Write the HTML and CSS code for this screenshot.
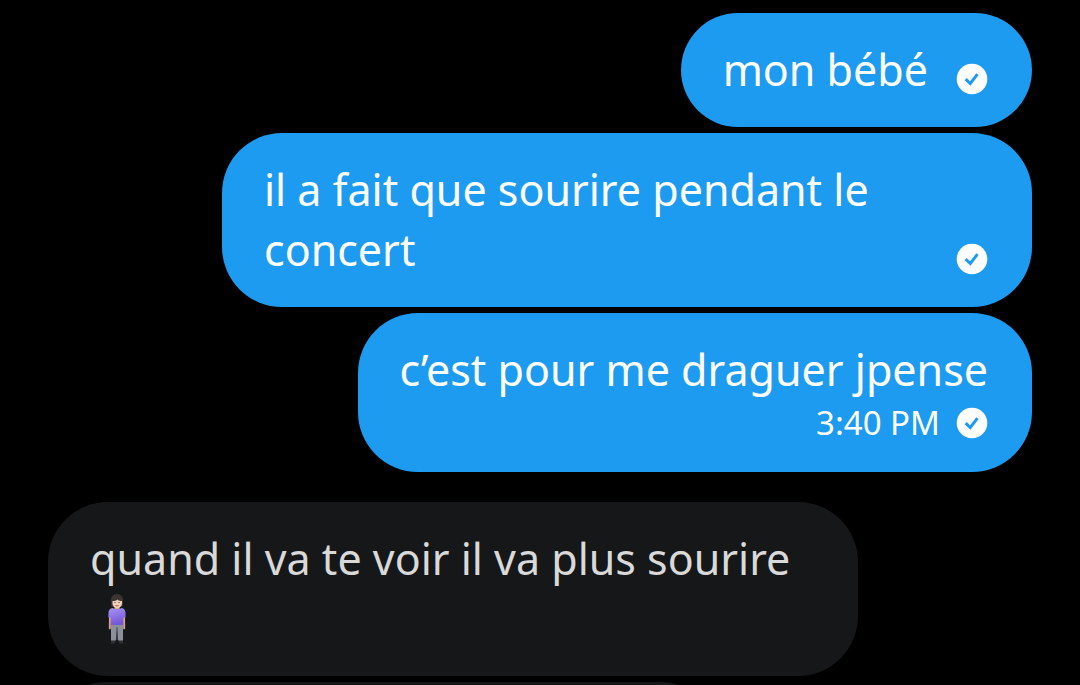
FILE: index.html
```
<!DOCTYPE html>
<html lang="fr">

<head>
    <meta charset="UTF-8">
    <meta name="viewport" content="width=device-width, initial-scale=1.0">
    <title>Messages</title>
    <link rel="stylesheet" href="styles.css">
</head>

<body>
    <!-- Shared icons -->
    <svg class="sprite" aria-hidden="true">
        <symbol id="check" viewBox="0 0 32 32">
            <circle cx="16" cy="16" r="15.3" fill="#fff" />
            <path d="M9.700 16.200l4.600 4.300 7.200-9.300" fill="none" stroke="#1d9bf0" stroke-width="3" />
        </symbol>
    </svg>

    <main class="thread">
        <div class="message sent">
            <p class="text">mon bébé</p>
            <svg class="check" role="img" aria-label="Sent"><use href="#check" /></svg>
        </div>

        <div class="message sent">
            <p class="text">il a fait que sourire pendant le concert</p>
            <svg class="check" role="img" aria-label="Sent"><use href="#check" /></svg>
        </div>

        <div class="message sent last">
            <p class="text">c’est pour me draguer jpense</p>
            <div class="meta">
                <time datetime="15:40">3:40 PM</time>
                <svg class="check" role="img" aria-label="Sent"><use href="#check" /></svg>
            </div>
        </div>

        <div class="message received">
            <p class="text">quand il va te voir il va plus sourire
                <svg class="emoji" viewBox="0 0 54 54" role="img" aria-label="Person standing">
                    <defs>
                        <linearGradient id="shirt" x1="0" y1="0" x2="0.3" y2="1">
                            <stop offset="0" stop-color="#a794f5" />
                            <stop offset="1" stop-color="#7557d8" />
                        </linearGradient>
                    </defs>
                    <path d="M21.5 46l-1 4.500h4.300l.7-4.500zM28.500 46l.7 4.500h4.300l-1-4.500z" fill="#303136" />
                    <path d="M21 31h12v16.500h-4.800L27 34l-1.200 13.500H21z" fill="#8b909b" />
                    <path d="M27 34v13" stroke="#55585f" stroke-width="1" />
                    <path d="M19 22l2 1-.2 12.500c-.4 1.500-1.800 1-2-.2zM35 22l-2 1 .2 12.500c.4 1.500 1.800 1 2-.2z" fill="#d6a28d" />
                    <path d="M24.500 12h5v4h-5z" fill="#d9aa91" />
                    <path d="M22.500 15c2 1.500 7 1.500 9 0 2.500.3 3.800 2 4 4.500l.2 5h-2.500V32H20.800v-7.500h-2.500l.2-5c.2-2.500 1.500-4.200 4-4.500z" fill="url(#shirt)" />
                    <ellipse cx="27" cy="7" rx="6.300" ry="6" fill="#3c3432" />
                    <path d="M21 7h12v4c0 2-1 3-2 3h-8c-1 0-2-1-2-3z" fill="#3c3432" />
                    <path d="M22.500 8c2 0 4-.5 5-1.500 1 1 2.500 1.500 4.500 1.500v2.500c0 2.700-2.300 4.500-4.800 4.500s-4.700-1.800-4.700-4.500z" fill="#f1cfb8" />
                    <path d="M24.500 9.500h1M28.500 9.500h1" stroke="#493632" stroke-width="1" />
                    <path d="M25.300 12.500q1.700 1 3.400 0" fill="none" stroke="#b8574f" stroke-width="1" />
                </svg>
            </p>
        </div>

        <div class="message received next"></div>
    </main>
</body>

</html>
```
FILE: styles.css
```
* {
    margin: 0;
    padding: 0;
    box-sizing: border-box;
}

body {
    font-family: 'Noto Sans', sans-serif;
    background-color: #000;
    color: #fff;
    height: 100vh;
    overflow: hidden;
}

.sprite {
    display: none;
}

/* Conversation */
.thread {
    display: flex;
    flex-direction: column;
    gap: 6px;
    padding: 13px 48px 0;
}

.message {
    display: flex;
    max-width: 75vw;
    padding: 27px 44px 27px 42px;
    border-radius: 60px;
    font-size: 43px;
    line-height: 60px;
}

.sent {
    align-self: flex-end;
    align-items: flex-end;
    gap: 28px;
    background-color: #1d9bf0;
}

.received {
    align-self: flex-start;
    background-color: #161719;
    color: #d9d9d9;
}

/* Last message of a group, with the time below */
.last {
    flex-direction: column;
    gap: 0;
    margin-bottom: 24px;
}

.meta {
    display: flex;
    align-items: center;
    gap: 16px;
    font-size: 33px;
    line-height: 45px;
}

.check {
    flex-shrink: 0;
    width: 32px;
    height: 32px;
    margin-bottom: 5px;
}

.meta .check {
    margin-bottom: 0;
}

.emoji {
    display: inline-block;
    width: 54px;
    height: 54px;
    vertical-align: -12px;
}

.next {
    width: 62vw;
    min-height: 114px;
}
```
